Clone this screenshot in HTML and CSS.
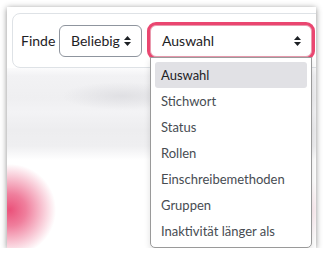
FILE: index.html
```html
<!DOCTYPE html>
<html lang="de">
<head>
    <meta charset="UTF-8">
    <meta name="viewport" content="width=device-width, initial-scale=1.0">
    <title>Finde</title>
    <link rel="stylesheet" href="styles.css">
</head>
<body>
    <div class="shot">
        <div class="filter-card">
            <span class="label">Finde</span>
            <div class="select small">
                <span>Beliebig</span>
                <svg class="arrows" width="7" height="10" viewBox="0 0 7 10"><path d="M3.5 0 L7 4 L0 4 Z M3.5 10 L7 6 L0 6 Z" fill="#1d2125"/></svg>
            </div>
            <div class="select wide focused">
                <span>Auswahl</span>
                <svg class="arrows" width="7" height="10" viewBox="0 0 7 10"><path d="M3.5 0 L7 4 L0 4 Z M3.5 10 L7 6 L0 6 Z" fill="#1d2125"/></svg>
                <ul class="listbox">
                    <li class="active">Auswahl</li>
                    <li>Stichwort</li>
                    <li>Status</li>
                    <li>Rollen</li>
                    <li>Einschreibemethoden</li>
                    <li>Gruppen</li>
                    <li>Inaktivität länger als</li>
                </ul>
            </div>
        </div>
        <div class="blurred"></div>
    </div>
</body>
</html>
```

FILE: styles.css
```css
/* Moodle-Filter mit offenem Auswahlmenü */
* {
    box-sizing: border-box;
}

body {
    margin: 0;
    background: #fff;
    font-family: Lato, 'Noto Sans', sans-serif;
    color: #1d2125;
}

.shot {
    margin: 7px 8px 0 7px;
    height: 241px;
    background: #fff;
    box-shadow: 0 1px 6px rgba(0, 0, 0, 0.45);
    overflow: hidden;
    padding: 6px 0 0 5px;
    display: flex;
    flex-direction: column;
}

.filter-card {
    display: flex;
    align-items: center;
    height: 55px;
    margin-right: -12px;
    padding-left: 8px;
    gap: 8px;
    border: 1px solid #dee2e6;
    border-radius: 8px;
    font-size: 14px;
    background: #fff;
    position: relative;
    z-index: 1;
}

.label {
    width: 30px;
}

.select {
    position: relative;
    display: flex;
    align-items: center;
    justify-content: space-between;
    height: 32px;
    border: 1px solid #8f959e;
    border-radius: 6px;
    padding: 0 10px 0 11px;
    background: #fff;
}

.small {
    width: 83px;
}

.wide {
    width: 162px;
    border-color: #e99aae;
    box-shadow: 0 0 0 3px #ea4670;
}

.arrows {
    flex: none;
}

.listbox {
    position: absolute;
    left: -1px;
    top: 31px;
    width: 162px;
    margin: 0;
    padding: 4px 4px 3px 4px;
    list-style: none;
    background: #fff;
    border: 1px solid #9a9a9a;
    border-radius: 0 0 5px 5px;
    box-shadow: 0 3px 6px rgba(0, 0, 0, 0.12);
    font-size: 13px;
    color: #474c52;
}

.listbox li {
    height: 26px;
    line-height: 26px;
    padding-left: 6px;
    border-radius: 3px;
    white-space: nowrap;
}

.listbox .active {
    background: #e1e1e5;
    color: #1d2125;
}

.blurred {
    flex: 1;
    margin: 0 -8px 0 -5px;
    background:
        radial-gradient(circle at 3px 142px, rgba(233, 72, 115, 0.95) 0, rgba(233, 72, 115, 0.7) 16px, rgba(233, 72, 115, 0) 46px),
        radial-gradient(ellipse 70px 30px at 300px 143px, rgba(240, 170, 190, 0.22), rgba(255, 255, 255, 0)),
        radial-gradient(ellipse 60px 14px at 115px 28px, rgba(220, 220, 224, 0.8), rgba(236, 236, 238, 0)),
        linear-gradient(180deg, #fbfbfc 0, #f2f2f4 8px, #efeff1 30px, #f3f3f5 44px, #ededef 62px, #efeff1 78px, #fff 92px, #fff 100%);
}
```
